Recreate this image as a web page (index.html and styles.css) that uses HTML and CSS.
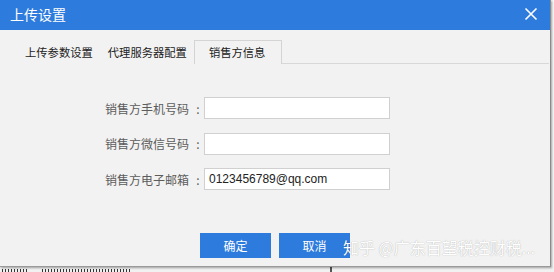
FILE: index.html
```html
<!DOCTYPE html>
<html lang="zh-CN">
<head>
<meta charset="utf-8">
<title>上传设置</title>
<link rel="stylesheet" href="styles.css">
</head>
<body>
<div class="screen">
  <div class="dialog">
    <div class="titlebar">
      <span class="title">上传设置</span>
      <svg class="close" width="14" height="14" viewBox="0 0 14 14"><path d="M1.5 1.5 L12.5 12.5 M12.5 1.5 L1.5 12.5" stroke="#fff" stroke-width="1.6" fill="none"/></svg>
    </div>
    <div class="tabs">
      <span class="tab tab-first">上传参数设置</span>
      <span class="tab tab-second">代理服务器配置</span>
      <span class="tab active">销售方信息</span>
      <span class="tab-fill"></span>
    </div>
    <div class="form">
      <label class="label">销售方手机号码<span class="colon">:</span></label>
      <div class="input"></div>
      <label class="label">销售方微信号码<span class="colon">:</span></label>
      <div class="input"></div>
      <label class="label">销售方电子邮箱<span class="colon">:</span></label>
      <div class="input">0123456789@qq.com</div>
    </div>
    <div class="buttons">
      <span class="btn">确定</span>
      <span class="btn">取消</span>
    </div>
    <div class="watermark">知乎 @广东百望税控财税...</div>
  </div>
  <div class="below">
    <span class="mark mark1"></span>
    <span class="mark mark2"></span>
    <span class="mark mark3"></span>
  </div>
</div>
</body>
</html>
```
FILE: styles.css
```css
html, body {
  margin: 0;
  padding: 0;
  background: #f4f4f4;
}
.screen {
  width: 554px;
  height: 272px;
  overflow: hidden;
  background: #f6f6f6;
  font-family: "Noto Sans CJK SC", "Liberation Sans", sans-serif;
}
.dialog {
  position: relative;
  width: 550px;
  height: 266px;
  background: #f2f2f2;
  border-right: 1px solid #8a8a8a;
  border-bottom: 1px solid #9a9a9a;
  box-shadow: 1px 1px 2px rgba(0,0,0,0.35);
  display: flex;
  flex-direction: column;
}
.titlebar {
  height: 30px;
  background: #2d7bdd;
  display: flex;
  align-items: center;
  justify-content: space-between;
  padding: 0 12px 0 10px;
  flex: none;
}
.title {
  color: #fff;
  font-size: 14px;
  line-height: 14px;
  padding-bottom: 2px;
}
.close {
  display: block;
  margin-bottom: 3px;
}
.tabs {
  height: 34px;
  display: flex;
  align-items: flex-end;
  flex: none;
  font-size: 11.3px;
  color: #222;
}
.tab {
  line-height: 23px;
  white-space: nowrap;
  border: 1px solid transparent;
  border-bottom: none;
}
.tab-first {
  margin-left: 24px;
}
.tab-second {
  margin-left: 13px;
}
.active {
  margin-left: 6px;
  padding: 0 16px 0 14px;
  border-color: #d4d4d4;
  background: #f2f2f2;
}
.tab-fill {
  flex: 1;
  height: 24px;
  border-bottom: 1px solid #d8d8d8;
  box-sizing: border-box;
  margin-right: 1px;
}
.form {
  display: grid;
  grid-template-columns: auto 186px;
  justify-content: start;
  align-items: center;
  column-gap: 0;
  row-gap: 13.5px;
  margin: 33px 0 0 105px;
}
.label {
  font-size: 12px;
  color: #5c5c5c;
  white-space: nowrap;
  display: flex;
  align-items: center;
}
.colon {
  width: 15px;
  padding-left: 3px;
  box-sizing: border-box;
  text-align: center;
}
.input {
  height: 22px;
  box-sizing: border-box;
  background: #fff;
  border: 1px solid #d0d0d0;
  font-family: "Liberation Sans", sans-serif;
  font-size: 12px;
  line-height: 20px;
  color: #222;
  padding-left: 4px;
}
.buttons {
  display: flex;
  gap: 8px;
  margin: 43px 0 0 200px;
}
.btn {
  width: 71px;
  height: 25px;
  background: #2d7bdd;
  color: #fff;
  font-size: 12px;
  line-height: 25px;
  text-align: center;
}
.watermark {
  position: absolute;
  left: 343px;
  top: 237px;
  font-size: 16px;
  line-height: 20px;
  color: #ffffff;
  white-space: nowrap;
  text-shadow: 0 0 1px rgba(0,0,0,0.35);
}
.below {
  height: 5px;
  display: flex;
  align-items: flex-end;
  background: #f1f1f1;
}
.mark {
  display: block;
  height: 3px;
  background: repeating-linear-gradient(90deg, #333 0 1px, transparent 1px 3px);
}
.mark1 { width: 26px; margin-left: 2px; }
.mark2 { width: 90px; margin-left: 14px; }
.mark3 { width: 2px; margin-left: 198px; height: 5px; background: #555; }
```
